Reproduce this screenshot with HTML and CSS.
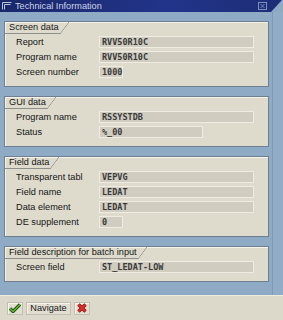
FILE: index.html
```html
<!DOCTYPE html>
<html lang="en">
<head>
    <meta charset="UTF-8">
    <title>Technical Information</title>
    <link rel="stylesheet" href="styles.css">
</head>
<body>
    <div class="window">
        <div class="titlebar">
            <svg class="title-icon" width="10" height="8" viewBox="0 0 10 8">
                <path d="M0.5 0.5H9.5M0.5 0.5V7.5M2.5 2.5H8.5M2.5 2.5V7.5" stroke="#b8c4e0" fill="none"/>
            </svg>
            <span class="title-text">Technical Information</span>
            <span class="close-btn">
                <svg width="9" height="8" viewBox="0 0 9 8">
                    <rect x="0.5" y="0.5" width="8" height="7" stroke="#7f8fbf" fill="none"/>
                    <path d="M2.5 2L6.5 6M6.5 2L2.5 6" stroke="#7f8fbf"/>
                </svg>
            </span>
        </div>

        <div class="main">
            <div class="content">
                <div class="group">
                    <div class="tab"><span class="tab-label">Screen data</span><span class="tab-slash"></span></div>
                    <div class="row"><span class="label">Report</span><span class="field long">RVV50R10C</span></div>
                    <div class="row"><span class="label">Program name</span><span class="field long">RVV50R10C</span></div>
                    <div class="row"><span class="label">Screen number</span><span class="field short">1000</span></div>
                </div>

                <div class="group">
                    <div class="tab"><span class="tab-label">GUI data</span><span class="tab-slash"></span></div>
                    <div class="row"><span class="label">Program name</span><span class="field long">RSSYSTDB</span></div>
                    <div class="row"><span class="label">Status</span><span class="field medium">%_00</span></div>
                </div>

                <div class="group">
                    <div class="tab"><span class="tab-label">Field data</span><span class="tab-slash"></span></div>
                    <div class="row"><span class="label">Transparent tabl</span><span class="field long">VEPVG</span></div>
                    <div class="row"><span class="label">Field name</span><span class="field long">LEDAT</span></div>
                    <div class="row"><span class="label">Data element</span><span class="field long">LEDAT</span></div>
                    <div class="row"><span class="label">DE supplement</span><span class="field short">0</span></div>
                </div>

                <div class="group">
                    <div class="tab"><span class="tab-label">Field description for batch input</span><span class="tab-slash"></span></div>
                    <div class="row"><span class="label">Screen field</span><span class="field long">ST_LEDAT-LOW</span></div>
                </div>
            </div>
            <div class="side"></div>
        </div>

        <div class="toolbar">
            <span class="btn btn-icon">
                <svg width="12" height="10" viewBox="0 0 12 10">
                    <path d="M1 5.5L4 8.5L11 1.5" stroke="#1f4a12" stroke-width="3.2" fill="none" stroke-linejoin="round"/>
                    <path d="M1 5.5L4 8.5L11 1.5" stroke="#5fb82c" stroke-width="1.6" fill="none" stroke-linejoin="round"/>
                </svg>
            </span>
            <span class="btn btn-text">Navigate</span>
            <span class="btn btn-icon">
                <svg width="10" height="10" viewBox="0 0 10 10">
                    <path d="M1.5 1.5L8.5 8.5M8.5 1.5L1.5 8.5" stroke="#7a1010" stroke-width="3.4"/>
                    <path d="M1.5 1.5L8.5 8.5M8.5 1.5L1.5 8.5" stroke="#e0302a" stroke-width="1.8"/>
                </svg>
            </span>
        </div>
    </div>
</body>
</html>
```

FILE: styles.css
```css
body {
    margin: 0;
    font-family: "Liberation Sans", Arial, sans-serif;
    font-size: 9.2px;
    color: #141414;
}

.window {
    width: 283px;
    height: 320px;
    display: flex;
    flex-direction: column;
    background-color: #8eaac4; /* blue-gray frame */
}

/* Title bar with the slanted right end */
.titlebar {
    height: 12px;
    flex: none;
    display: flex;
    align-items: center;
    background: linear-gradient(90deg, #1a286a, #22348a 60%, #1d2d76);
    clip-path: polygon(0 0, 282px 0, 271px 12px, 0 12px);
    color: #ccd4e8;
}

.title-icon {
    margin: 0 3px 0 2px;
}

.title-text {
    flex: 1;
    line-height: 12px;
}

.close-btn {
    display: flex;
    margin-right: 16px;
}

.main {
    flex: 1;
    display: flex;
}

.content {
    width: 265px;
    padding: 9px 3px 0 4px;
    display: flex;
    flex-direction: column;
    gap: 9px;
}

.side {
    flex: 1;
    background-color: #91acc6;
    border-left: 1px solid #8199b2;
}

/* Group boxes */
.group {
    border: 1px solid #6f7f90;
    background-color: #dedbcc;
    box-shadow: inset 1px 1px 0 #f5f3ea;
    padding-bottom: 7px;
}

.tab {
    display: flex;
    height: 12px;
}

.tab-label {
    padding: 0 1px 0 4px;
    line-height: 11px;
    border-bottom: 1px solid #8e8f8a;
}

.tab-slash {
    width: 9px;
    background: linear-gradient(to top left, transparent calc(50% - 0.6px), #8e8f8a 50%, transparent calc(50% + 0.6px));
}

.row {
    height: 15px;
    display: flex;
    align-items: center;
    padding-left: 11px;
}

.label {
    width: 83px;
}

.field {
    box-sizing: border-box;
    height: 12px;
    padding: 0 2px;
    line-height: 10px;
    font-family: "DejaVu Sans Mono", monospace;
    font-size: 8.5px;
    font-weight: bold;
    color: #3a3a3a;
    background-color: #d0ccbf;
    border: 1px solid #efede3;
}

.long {
    width: 155px;
}

.medium {
    width: 104px;
}

.short {
    width: 24px;
}

/* Bottom toolbar */
.toolbar {
    height: 25px;
    flex: none;
    box-sizing: border-box;
    display: flex;
    align-items: center;
    gap: 3px;
    padding-left: 7px;
    background-color: #dcd9ca;
    border-top: 1px solid #eeece2;
}

.btn {
    box-sizing: border-box;
    height: 13px;
    display: flex;
    align-items: center;
    justify-content: center;
    background-color: #e2dfd2;
    border: 1px solid #c2beb0;
    box-shadow: inset 1px 1px 0 #f6f4ec;
}

.btn-icon {
    width: 16px;
}

.btn-text {
    width: 45px;
}
```
